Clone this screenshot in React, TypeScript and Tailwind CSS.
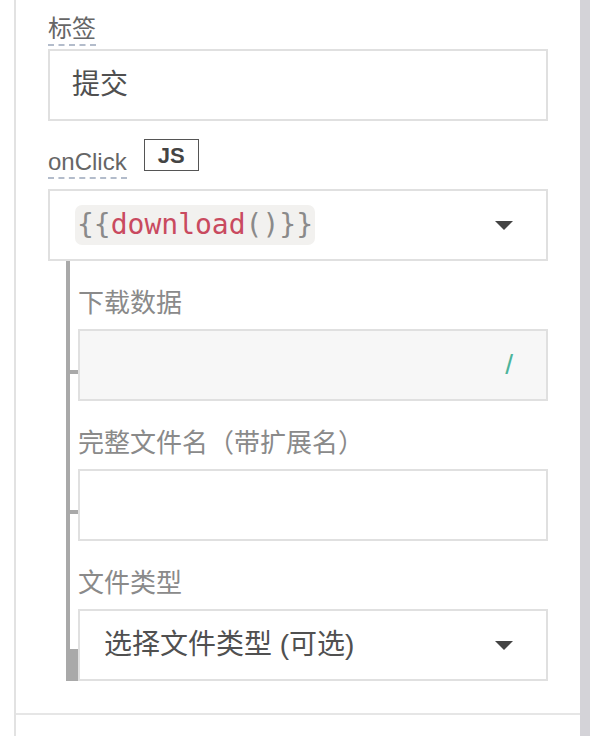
import React from 'react';

const Caret = () => (
  <svg width="18" height="9" viewBox="0 0 18 9" className="shrink-0">
    <path d="M0 0h18L9 9z" fill="#444" />
  </svg>
);

const TopLabel = ({ children }: { children: React.ReactNode }) => (
  <span className="border-b-2 border-dashed border-[#b3bccb] text-[24px] leading-[30px] text-[#666]">
    {children}
  </span>
);

const SubLabel = ({ children }: { children: React.ReactNode }) => (
  <div className="text-[26px] leading-[34px] text-[#8a8a8a]">{children}</div>
);

const Tick = ({ last }: { last?: boolean }) =>
  last ? (
    <div className="absolute left-[-14px] top-[38px] bottom-[-2px] w-[12px] bg-[#a9a9a9]" />
  ) : (
    <div className="absolute left-[-14px] top-[39px] h-[4px] w-[12px] bg-[#a9a9a9]" />
  );

export default function App() {
  return (
    <div className="flex h-[736px] w-[590px] bg-white font-['Liberation_Sans','Noto_Sans_CJK_SC',sans-serif]">
      <div className="ml-[14px] flex flex-1 flex-col border-l-2 border-[#e2e2e2]">
        <div className="px-8 pt-[14px]">
          {/* label */}
          <div className="flex">
            <TopLabel>标签</TopLabel>
          </div>
          <div className="mt-[3px] flex h-[72px] items-center border-2 border-[#e0e0e0] px-[22px] text-[28px] text-[#505050]">
            提交
          </div>

          {/* onClick */}
          <div className="mt-[18px] flex items-end gap-[17px]">
            <TopLabel>onClick</TopLabel>
            <span className="mb-[8px] flex h-[32px] w-[55px] items-center justify-center border border-[#555] text-[22px] font-bold text-[#444]">
              JS
            </span>
          </div>
          <div className="mt-[10px] flex h-[72px] items-center justify-between border-2 border-[#e0e0e0] pl-[25px] pr-[33px]">
            <span className="rounded-[7px] bg-[#f2f1ef] px-[2px] font-['DejaVu_Sans_Mono',monospace] text-[28px] leading-[40px] text-[#8a8a8a]">
              {'{{'}
              <span className="text-[#c94a5f]">download</span>
              {'()}}'}
            </span>
            <Caret />
          </div>

          {/* action params */}
          <div className="ml-[18px] flex flex-col border-l-4 border-[#a9a9a9] pl-[8px] pt-[25px]">
            <SubLabel>下载数据</SubLabel>
            <div className="relative mt-[9px] flex h-[72px] items-center justify-end border-2 border-[#e0e0e0] bg-[#f7f7f7] pr-[33px] text-[28px] text-[#4cb49a]">
              <Tick />
              /
            </div>

            <div className="mt-[25px]">
              <SubLabel>完整文件名（带扩展名）</SubLabel>
            </div>
            <div className="relative mt-[9px] h-[72px] border-2 border-[#e0e0e0] bg-white">
              <Tick />
            </div>

            <div className="mt-[25px]">
              <SubLabel>文件类型</SubLabel>
            </div>
            <div className="relative mt-[9px] flex h-[72px] items-center justify-between border-2 border-[#e0e0e0] pl-[24px] pr-[33px] text-[28px] text-[#505050]">
              <Tick last />
              <span>选择文件类型 (可选)</span>
              <Caret />
            </div>
          </div>
        </div>

        <div className="mt-auto mb-[21px] h-[2px] bg-[#e6e6e6]" />
      </div>
      <div className="w-[10px] bg-[#d4d3d8]" />
    </div>
  );
}
